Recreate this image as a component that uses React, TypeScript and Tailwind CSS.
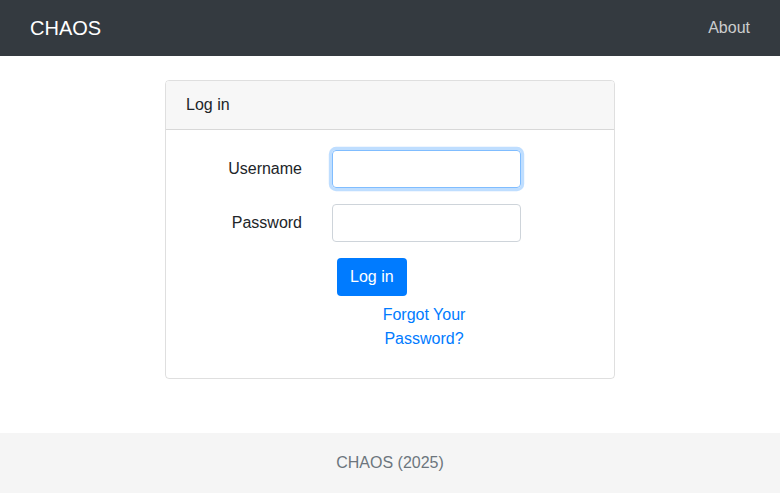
export default function App() {
  return (
    <div
      className="min-h-screen flex flex-col bg-white text-[#212529] text-[16px] leading-6"
      style={{ fontFamily: '"Liberation Sans", Arial, sans-serif' }}
    >
      {/* Navbar */}
      <nav className="h-[56px] bg-[#343a40] flex items-center justify-between px-[30px]">
        <a href="#" className="text-white text-[20px] leading-[30px]">CHAOS</a>
        <a href="#" className="text-[rgba(255,255,255,0.75)] text-[16px]">About</a>
      </nav>

      {/* Main */}
      <main className="flex-1">
        <div className="w-[450px] mx-auto mt-[24px] border border-[rgba(0,0,0,0.125)] rounded-[4px] overflow-hidden">
          <div className="bg-[#f7f7f7] border-b border-[rgba(0,0,0,0.125)] px-[20px] py-[12px]">Log in</div>
          <div className="px-[5px] pt-[20px] pb-[20px]">
            <div className="flex items-center mb-[16px]">
              <label className="w-[146px] text-right pr-[15px]">Username</label>
              <div className="pl-[15px]">
                <input
                  type="text"
                  className="w-[189px] h-[38px] rounded-[4px] border border-[#80bdff] shadow-[0_0_0_3.2px_rgba(0,123,255,0.25)] outline-none px-3"
                />
              </div>
            </div>
            <div className="flex items-center mb-[16px]">
              <label className="w-[146px] text-right pr-[15px]">Password</label>
              <div className="pl-[15px]">
                <input
                  type="password"
                  className="w-[189px] h-[38px] rounded-[4px] border border-[#ced4da] outline-none px-3"
                />
              </div>
            </div>
            <div className="pl-[161px]">
              <button className="ml-[5px] h-[38px] px-[13px] rounded-[4px] bg-[#007bff] text-white">Log in</button>
              <div className="ml-[42px] w-[100px] text-center pt-[7px] pb-[7px]">
                <a href="#" className="text-[#007bff]">Forgot Your Password?</a>
              </div>
            </div>
          </div>
        </div>
      </main>

      {/* Footer */}
      <footer className="h-[60px] bg-[#f5f5f5] flex items-center justify-center text-[#6c757d]">
        CHAOS (2025)
      </footer>
    </div>
  );
}
